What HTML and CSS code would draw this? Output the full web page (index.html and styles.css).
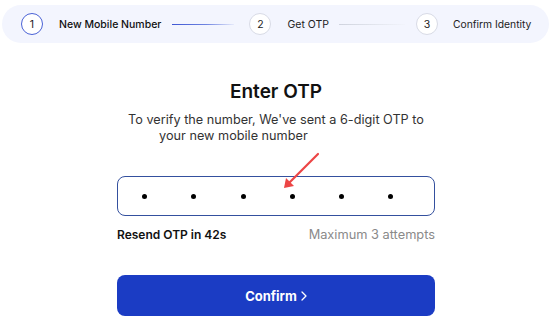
FILE: index.html
```html
<!DOCTYPE html>
<html>
<head>
<meta charset="utf-8">
<link rel="stylesheet" href="styles.css">
</head>
<body>
<div class="stepper">
  <div class="circle active">1</div>
  <span class="label first">New Mobile Number</span>
  <span class="line line-active"></span>
  <div class="circle">2</div>
  <span class="label second">Get OTP</span>
  <span class="line line-idle"></span>
  <div class="circle">3</div>
  <span class="label third">Confirm Identity</span>
</div>

<div class="main">
  <h1 class="title">Enter OTP</h1>
  <div class="subtitle-wrap">
    <p class="subtitle"><span class="l1">To verify the number, We've sent a 6-digit OTP to</span><span class="l2">your new mobile number</span></p>
  </div>
  <div class="otp-box">
    <span class="dot"></span><span class="dot"></span><span class="dot"></span><span class="dot"></span><span class="dot"></span><span class="dot"></span>
  </div>
  <div class="meta">
    <span class="resend">Resend OTP in 42s</span>
    <span class="attempts">Maximum 3 attempts</span>
  </div>
  <button class="confirm">Confirm <svg class="chev" width="6" height="10" viewBox="0 0 6 10"><path d="M1 1 L5 5 L1 9" fill="none" stroke="#fff" stroke-width="1.3" stroke-linecap="round" stroke-linejoin="round"/></svg></button>
</div>

<svg class="arrow" width="550" height="327" viewBox="0 0 550 327">
  <line x1="318" y1="154" x2="289" y2="183" stroke="#ec4545" stroke-width="2.2" stroke-linecap="round"/>
  <path d="M284 188 L286 178 L294 186 Z" fill="#ec4545"/>
</svg>
</body>
</html>
```

FILE: styles.css
```css
* { box-sizing: border-box; }
html, body { margin: 0; padding: 0; }
body {
  width: 550px;
  height: 327px;
  background: #fff;
  font-family: Inter, "Noto Sans", sans-serif;
  color: #111;
  position: relative;
  overflow: hidden;
}
.stepper {
  margin: 5px 1px 0 2px;
  height: 38px;
  border-radius: 19px;
  background: #f3f5fe;
  display: flex;
  align-items: center;
  padding-left: 19px;
}
.circle {
  width: 22px;
  height: 22px;
  border-radius: 50%;
  background: #fff;
  border: 1px solid #d8dbe6;
  display: flex;
  align-items: center;
  justify-content: center;
  font-size: 10.5px;
  color: #222;
  flex: none;
}
.circle.active {
  border: 1.5px solid #4a62d6;
}
.label {
  font-size: 10.5px;
  color: #222;
  white-space: nowrap;
}
.label.first { margin-left: 16px; font-weight: 500; color: #111; }
.label.second { margin-left: 16px; }
.label.third { margin-left: 15px; font-size: 10.3px; }
.line { height: 1px; flex: none; }
.line-active {
  width: 62px;
  margin: 0 15px 0 11px;
  background: linear-gradient(90deg, #3e57d4 0%, #6f84e0 55%, rgba(200,208,245,0.3) 100%);
}
.line-idle {
  width: 66px;
  margin: 0 11px 0 10px;
  background: linear-gradient(90deg, #cfd3de 0%, #e4e7ef 60%, rgba(240,242,248,0.4) 100%);
}
.main {
  width: 318px;
  margin-left: 117px;
}
.title {
  margin: 37px 0 0;
  font-size: 19px;
  line-height: 24px;
  font-weight: 600;
  text-align: center;
  color: #111;
}
.subtitle-wrap {
  text-align: center;
  margin-top: 8px;
}
.subtitle {
  display: inline-block;
  margin: 0;
  text-align: left;
  font-size: 12.7px;
  line-height: 16px;
  color: #333;
  white-space: nowrap;
}
.subtitle span { display: block; }
.subtitle .l2 { padding-left: 31px; }
.otp-box {
  margin-top: 32px;
  height: 40px;
  border: 1.5px solid #34509e;
  border-radius: 8px;
  display: flex;
  align-items: center;
  padding-left: 24px;
  gap: 44.3px;
}
.dot {
  width: 5px;
  height: 5px;
  border-radius: 50%;
  background: #000;
  flex: none;
}
.meta {
  margin-top: 11px;
  display: flex;
  justify-content: space-between;
  align-items: baseline;
  font-size: 12px;
  line-height: 15px;
}
.resend { font-weight: 600; color: #111; }
.attempts { color: #8a8a8a; font-size: 12.8px; }
.confirm {
  margin-top: 33px;
  width: 318px;
  height: 41px;
  border: none;
  border-radius: 8px;
  background: #1b3cc4;
  color: #fff;
  font-family: Inter, "Noto Sans", sans-serif;
  font-size: 13px;
  font-weight: 700;
  display: flex;
  align-items: center;
  justify-content: center;
  gap: 4px;
  padding: 0;
}
.chev { display: block; }
.arrow {
  position: absolute;
  left: 0;
  top: 0;
  pointer-events: none;
}
```
